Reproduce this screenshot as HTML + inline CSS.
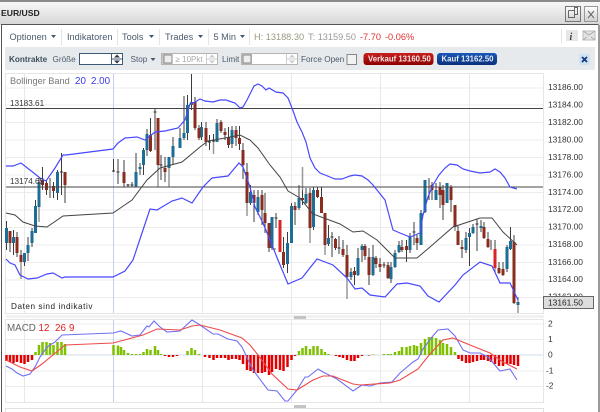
<!DOCTYPE html>
<html><head><meta charset="utf-8"><style>
html,body{margin:0;padding:0;background:#fff;overflow:hidden}
svg{display:block;font-family:"Liberation Sans",sans-serif;filter:blur(.3px)}
.t{font-size:9.2px;fill:#4a5a6c}
.s{font-size:8.2px;fill:#4a5a6c}
.a{font-size:8.4px;fill:#333}
</style></head><body>
<svg width="600" height="412" viewBox="0 0 600 412" xmlns="http://www.w3.org/2000/svg">
<defs>
<linearGradient id="tb" x1="0" y1="0" x2="0" y2="1"><stop offset="0" stop-color="#fafafa"/><stop offset="1" stop-color="#d6d6d6"/></linearGradient>
<linearGradient id="rb" x1="0" y1="0" x2="0" y2="1"><stop offset="0" stop-color="#c82020"/><stop offset="1" stop-color="#8c0000"/></linearGradient>
<linearGradient id="bb" x1="0" y1="0" x2="0" y2="1"><stop offset="0" stop-color="#1a58b8"/><stop offset="1" stop-color="#08307c"/></linearGradient>
<linearGradient id="gb" x1="0" y1="0" x2="0" y2="1"><stop offset="0" stop-color="#fff"/><stop offset="1" stop-color="#cfcfcf"/></linearGradient>
</defs>
<rect width="600" height="412" fill="#fff"/>
<!-- title -->
<rect x="0" y="0" width="600" height="25" fill="url(#tb)"/>
<rect x="0" y="0" width="600" height="2" fill="#8a8a8a"/>
<text x="1" y="16" font-size="8.6" font-weight="bold" fill="#222">EUR/USD</text>
<rect x="565.5" y="6.5" width="15" height="15" fill="url(#gb)" stroke="#777"/>
<path d="M569.5 10.5h6v-3h3v7h-3M569.5 10.5v7h6v-7" transform="translate(-1 0)" fill="none" stroke="#666"/>
<rect x="584.5" y="6.5" width="13" height="15" fill="url(#gb)" stroke="#999"/>
<path d="M588 11l6 7M594 11l-6 7" stroke="#666" fill="none"/>
<!-- window frame -->
<rect x="1" y="24.5" width="598" height="387" fill="#fff"/>
<path d="M1.5 412V24.5H598.5" fill="none" stroke="#555"/>
<rect x="598" y="25" width="2" height="387" fill="#9a9a9a"/>
<!-- toolbar 1 -->
<text class="t" x="9.5" y="40">Optionen</text>
<path d="M51 35h5l-2.5 3z" fill="#44566a"/>
<path d="M61.5 29v16M117.5 29v16M159.5 29v16M208.5 29v16M249.5 29v16M561.5 29v14" stroke="#e4e4e4"/>
<text class="t" x="67" y="40">Indikatoren</text>
<text class="t" x="122" y="40">Tools</text>
<path d="M149 35h5l-2.500 3z" fill="#44566a"/>
<text class="t" x="165" y="40">Trades</text>
<path d="M198 35h5l-2.500 3z" fill="#44566a"/>
<text class="t" x="213.500" y="40">5 Min</text>
<path d="M240 35h5l-2.500 3z" fill="#44566a"/>
<text x="254" y="40" font-size="9.200" fill="#9a9a80">H: 13188.30</text>
<text x="308" y="40" font-size="9.200" fill="#999">T: 13159.50</text>
<text x="360" y="40" font-size="9.200" fill="#e03030">-7.70</text>
<text x="385" y="40" font-size="9.200" fill="#e03030">-0.06%</text>
<rect x="566" y="30" width="12" height="11" fill="#e6e6e6"/>
<text x="569.500" y="40" font-size="10" font-weight="bold" font-style="italic" fill="#444" font-family="Liberation Serif">i</text>
<rect x="583" y="31" width="12" height="9" fill="#e4e4e4" stroke="#bbb"/>
<path d="M583 31l6 4 6-4M583 40l4-3M595 40l-4-3" stroke="#aaa" fill="none"/>
<!-- toolbar 2 -->
<rect x="5" y="47" width="590" height="23" fill="#e6eaec"/>
<text x="9" y="62" font-size="8.200" font-weight="bold" fill="#3c5060">Kontrakte</text>
<text class="s" x="52.500" y="62">Größe</text>
<rect x="79.500" y="53.500" width="43" height="11" fill="#fff" stroke="#3c5a78"/>
<path d="M111.500 54v10M112 59h10" stroke="#3c5a78"/>
<path d="M114 57.500h6l-3-3zM114 60.500h6l-3 3z" fill="#334"/>
<text class="s" x="130.500" y="62">Stop</text>
<path d="M150.500 58h5l-2.500 3z" fill="#44566a"/>
<rect x="161.500" y="53.500" width="56" height="11" fill="#fff" stroke="#b4b4b4"/>
<rect x="162" y="54" width="10" height="10" fill="#c9c9c9"/>
<rect x="164" y="55" width="8" height="8" fill="#eee" stroke="#888"/>
<text x="175.500" y="62" font-size="8" fill="#aaa">≥ 10Pkt</text>
<path d="M206.500 54v10M207 59h10" stroke="#ccc"/>
<path d="M209 57.500h6l-3-3zM209 60.500h6l-3 3z" fill="#ccc"/>
<text class="s" x="222" y="62">Limit</text>
<rect x="241.500" y="53.500" width="56" height="11" fill="#fff" stroke="#b4b4b4"/>
<rect x="242" y="54" width="10" height="10" fill="#c9c9c9"/>
<rect x="243" y="55" width="8" height="8" fill="#eee" stroke="#888"/>
<path d="M286.500 54v10M287 59h10" stroke="#ccc"/>
<path d="M289 57.500h6l-3-3zM289 60.500h6l-3 3z" fill="#ccc"/>
<text class="s" x="301" y="62">Force Open</text>
<rect x="347" y="54.500" width="9.500" height="10" fill="#f2f2f2" stroke="#888"/>
<rect x="363.500" y="53" width="70" height="12" rx="3" fill="url(#rb)"/>
<text x="368" y="61.500" font-size="7.800" font-weight="bold" fill="#fff" fill-opacity=".9">Verkauf 13160.50</text>
<rect x="437" y="53" width="60" height="12" rx="3" fill="url(#bb)"/>
<text x="441.500" y="61.500" font-size="7.800" font-weight="bold" fill="#fff" fill-opacity=".9">Kauf 13162.50</text>
<rect x="579" y="54" width="11" height="11" rx="2" fill="#cfe2f2"/>
<path d="M582 57l5 5M587 57l-5 5" stroke="#123a7c" stroke-width="1.800"/>
<!-- chart frame -->
<rect x="5.500" y="73.500" width="538" height="240" fill="#fff" stroke="#e6e6e6"/>
<path d="M6 88H543M6 105H543M6 122.500H543M6 140H543M6 157.500H543M6 175H543M6 192.500H543M6 210H543M6 227.500H543M6 245H543M6 262.500H543M6 280H543M6 297.500H543" stroke="#ececec" stroke-width="1"/>
<path d="M24.500 74V313M202.500 74V313M291.500 74V313M380.500 74V313M469.500 74V313" stroke="#e8e8e8"/>
<path d="M113.500 74V313" stroke="#c4cfe8"/>
<rect x="6" y="315" width="538" height="3" fill="#f2f2f2"/>
<!-- wicks -->
<path fill="none" stroke="#3c3c3c" stroke-width="1" d="M6.500 221V250M10 231V252M13.500 230V255M17 232V257M21 250V258M24.500 253V266M28 237V261M32 228V247M35.500 200V233M39 178V210M42.500 167V190M46.500 180V195M50 178V198M53.500 182V198M57.500 170V200M61.500 153V195M65 172V203M113.500 159V172M118 159V184M124 160V187M128 184V187M132 182V187M136 153V187M140 163V175M143.500 148V175M147 129V156M150.500 118V152M155 108V150M158 118V165M161 155V180M165 157V182M169 157V175M173 137V165M180 128V148M184 96V140M187.500 95V140M191.500 74V110M195 97V130M199 125V140M201.500 122V140M206 122V146M209.500 135V150M213.500 134V146M217 119V142M221 120V133M225 128V140M228.500 127V148M232 126V148M236 126V146M239.500 126V150M243 143V179M247 163V205M250.500 185V205M254 190V222M258 190V212M262 190V225M265 193V233M269 223V252M272 217V250M276 213V228M280 220V252M283.500 237V268M287.500 232V273M291.500 203V243M295 202V225M299 185V210M302.500 190V205M306 188V204M310 188V228M313.500 187V230M317.500 187V198M321.500 187V213M325 213V245M328.500 225V246M332 232V257M335.500 238V250M339 236V254M343 240V257M347 245V277M351 268V280M354.500 267V285M358 248V276M362 244V262M365 244V260M369 248V285M373 245V276M376 256V268M380 258V272M384 262V268M388 262V279M391 262V283M395 250V268M399 241V253M402 240V252M406.500 240V262M410 233V253M414 222V245M417 235V250M421 210V245M425 180V213M429 178V200M432 182V200M436 183V198M440 182V208M443 185V220M447 183V203M451 185V212M455 205V228M458 226V245M462 240V258M466 232V253M469.500 228V266M473 224V234M477 219V251M481 220V232M484 222V239M488 232V248M491 240V250M495 240V268M499 262V274M503 262V276M507 245V272M510.500 227V250M514 235V304" />
<!-- grey tails -->
<path fill="none" stroke="#999" stroke-width="1.500" d="M21 262V279M39 207V222M247 203V216M258 212V215M275 248V250M310 228V243M325 245V255M347 277V299M455 227V231M518 297V313M495 268V272M158 165V187M169 168V187M136 172V187M213.500 142V154M302.500 167V190"/>
<!-- bodies -->
<path fill="none" stroke="#1c6e96" stroke-width="3" d="M6.500 228V243M13.500 237V243M24.500 253V262M28 245V253M32 231V243M35.500 206V233M39 182V207M57.500 172V193M136 172V187M140 167V169M143.500 150V165M147 134V150M169 157V168M173 146V157M180 138V148M184 133V138M187.500 105V133M191.500 102V105M201.500 127V137M217 123V142M232 130V144M250.500 192V203M258 197V212M272 217V248M287.500 243V264M291.500 206V243M299 198V208M306 194V203M313.500 190V227M328.500 238V244M351 272V277M358 258V275M362 246V250M373 257V275M391 267V279M395 253V267M399 245V252M410 237V250M421 213V245M425 180V212M436 190V200M447 183V203M466 238V250M469.500 233V237M473 227V233M481 226V228M507 247V269M510.500 241V249M518 302V305"/>
<path fill="none" stroke="#8a2c20" stroke-width="3" d="M10 231V243M17 237V253M21 255V262M42.500 180V185M46.500 183V190M53.500 186V191M65 172V185M124 172V183M150.500 135V151M158 118V165M165 168V172M195 102V128M199 128V138M206 128V142M221 122V131M225 132V135M228.500 137V145M236 130V138M239.500 138V144M243 150V165M247 172V203M254 195V203M262 195V210M265 213V223M269 223V248M283.500 252V265M295 206V210M302.500 198V200M310 193V228M317.500 190V197M321.500 197V213M325 213V245M335.500 239V248M343 249V255M347 255V277M354.500 271V275M365 246V256M369 257V275M376 258V264M380 264V267M388 265V278M402 247V250M406.500 246V250M417 238V243M432 185V190M440 187V195M443 190V205M451 187V200M455 205V227M458 231V245M462 247V249M484 227V238M488 239V247M499 268V273M503 269V275M514 242V303"/>
<path fill="none" stroke="#d82424" stroke-width="3" d="M280 220V252M495 249V268"/>
<!-- doji ticks -->
<path stroke="#333" stroke-width="1" fill="none" d="M60 172h3M112 171h3M116.500 172h3M126.500 185h3M130.500 185h3M153.500 112h3M159.500 165h3M208 142h3M212 141h3M274.500 218h3M330.500 237h3M337.500 248h3M382.500 265h3M412.500 232h3M475.500 224h3"/>
<!-- hlines -->
<path d="M6 108.500H543M6 187H543" stroke="#444" stroke-width="1"/>
<!-- bands -->
<polyline fill="none" stroke="#4848ff" stroke-width="1.200" points="6,166 13,166 21,163 30,170 40,178 46,181 55,168 63,155 66,155 113,149 118,143 125,138 137,137 145,140 155,132 165,131 178,128 185,120 190,104 195,102 200,99 205,101 213,102 220,100 226,100 235,103 240,108 243,107 247,100 250,94 254,86 258,84 262,86 266,90 269,88 276,92 283,93 288,98 292,108 297,122 302,132 306,142 310,158 315,168 320,173 325,175 330,177 335,179 342,179 350,176 355,175 362,176 368,180 373,185 377,190 385,200 393,230 400,233 410,237 420,233 423,215 428,197 433,185 439,175 445,168 450,164 457,165 463,169 470,171 480,173 490,172 495,169 500,172 505,178 510,187 517,189"/>
<polyline fill="none" stroke="#4848ff" stroke-width="1.200" points="6,259 10,263 15,265 20,275 28,279 37,278 47,274 53,273 62,278 65,277 113,277 125,271 133,260 142,233 150,209 157,210 172,201 182,198 192,203 203,187 212,178 228,176 239,163 243,167 250,187 255,207 263,223 272,245 278,260 288,284 302,278 317,259 333,265 347,278 355,289 362,288 370,295 385,297 397,284 407,283 420,286 428,296 439,302 455,285 463,275 480,262 492,266 500,283 510,283 518,300"/>
<polyline fill="none" stroke="#444" stroke-width="1" points="6,213 15,215 23,222 35,226 47,227 63,216 113,213 132,200 147,180 160,168 182,162 200,147 208,141 225,138 240,135 250,140 258,148 270,165 280,177 288,191 300,198 313,214 340,224 353,232 363,231 377,240 395,258 417,258 430,247 453,227 480,218 492,218 503,232 517,245"/>
<!-- labels -->
<text x="10" y="84" font-size="9.200" fill="#777">Bollinger Band</text>
<text x="75" y="84" font-size="9.800" fill="#3a3af0">20</text>
<text x="91" y="84" font-size="9.800" fill="#3a3af0">2.00</text>
<text x="10" y="106" font-size="8.200" fill="#333">13183.61</text>
<text x="10" y="184" font-size="8.200" fill="#333">13174.65</text>
<text x="11" y="309" font-size="8.200" fill="#222" letter-spacing=".55">Daten sind indikativ</text>
<!-- axis -->
<g class="a">
<text class="a" x="548" y="90">13186.00</text>
<text class="a" x="548" y="107.500">13184.00</text>
<text class="a" x="548" y="125">13182.00</text>
<text class="a" x="548" y="142.500">13180.00</text>
<text class="a" x="548" y="160">13178.00</text>
<text class="a" x="548" y="177.500">13176.00</text>
<text class="a" x="548" y="195">13174.00</text>
<text class="a" x="548" y="212">13172.00</text>
<text class="a" x="548" y="229.500">13170.00</text>
<text class="a" x="548" y="247">13168.00</text>
<text class="a" x="548" y="265">13166.00</text>
<text class="a" x="548" y="282">13164.00</text>
<text class="a" x="548" y="299.500">13162.00</text>
</g>
<rect x="543.500" y="296.500" width="50" height="12" fill="#dedede" stroke="#666"/>
<text x="548" y="305.500" font-size="8.400" fill="#222">13161.50</text>
<rect x="294" y="316" width="12" height="4" fill="#c4c4c4"/>
<!-- MACD -->
<rect x="5.500" y="319.500" width="538" height="83" fill="#fff" stroke="#e6e6e6"/>
<path d="M6 324H543M6 339.500H543M6 371H543M6 386.500H543" stroke="#ececec"/>
<path d="M6 355H543" stroke="#d0dcec"/>
<path d="M24.500 320V402M202.500 320V402M291.500 320V402M380.500 320V402M469.500 320V402" stroke="#e8e8e8"/>
<path d="M113.500 320V402" stroke="#c4cfe8"/>
<path fill="none" stroke="#7fc000" stroke-width="2.500" d="M35.500 355V352M39 355V345M42.500 355V342M46.500 355V342M50 355V343M53.500 355V345M57.500 355V342M61.500 355V342M65 355V344M113.500 355V345M118 355V345.500M121 355V347M124 355V350M128 355V353M132 355V354M136 355V354M140 355V354M143.500 355V352M147 355V349M150.500 355V350M155 355V346M158 355V350M161 355V354M187.500 355V351M191.500 355V348M195 355V350M199 355V354M299 355V351M302.500 355V348M306 355V346M310 355V349M313.500 355V346M317.500 355V346M321.500 355V349M325 355V352M328.500 355V354M373 355V354.500M384 355V354M388 355V354M391 355V354M395 355V352M399 355V351M402 355V347M406.500 355V347M410 355V346M414 355V345M417 355V346M421 355V343M425 355V339M429 355V337M432 355V337M436 355V338M440 355V340M443 355V343M447 355V344M451 355V347M455 355V352"/>
<path fill="none" stroke="#e20000" stroke-width="2.500" d="M6.500 355V361M10 355V362M13.500 355V363M17 355V362M21 355V363M24.500 355V364M28 355V362M32 355V360M165 355V356M169 355V357M173 355V357M177 355V356M205 355V357M209.500 355V358M213.500 355V360M217 355V358M221 355V358M225 355V358M228.500 355V360M232 355V359M236 355V359M239.500 355V360M243 355V364M247 355V370M250.500 355V371M254 355V373M258 355V373M262 355V373M265 355V372M269 355V375M272 355V372M276 355V369M280 355V370M283.500 355V371M287.500 355V367M291.500 355V360M295 355V356M336 355V356M339.500 355V357M343 355V358M347 355V360M351 355V361M354.500 355V361M358 355V358M362 355V356M369 355V355.500M458.500 355V359M462 355V361M466 355V363M469.500 355V363M473 355V362M477 355V361M481 355V360M484 355V360M488 355V361M491 355V362M495 355V364M499 355V366M503 355V366M507 355V364M510.500 355V364M514 355V365M518 355V366"/>
<polyline fill="none" stroke="#7070f4" stroke-width="1.100" points="6,366 12,369 17,373 23,376 30,374 35,367 40,357 47,347 55,342 62,335 113,333 121,331 132,336 140,335 147,326 149,327 154,321 160,327 167,332 180,331 192,320 200,325 213,334 218,334 228,339 237,341 242,347 253,370 268,390 277,391 285,401 288,401 297,390 305,377 308,377 318,369 323,372 337,379 353,391 362,385 370,386 380,383 392,382 400,373 413,362 418,359 423,349 432,337 438,330 448,329 455,336 463,350 470,353 480,353 488,357 500,371 510,369 517,380"/>
<polyline fill="none" stroke="#ee4a4a" stroke-width="1.100" points="6,360 20,367 32,371 42,364 65,345 113,343 132,338 143,335 157,329 180,330 192,326 200,325 220,330 242,338 250,345 258,355 272,374 288,389 297,390 313,380 323,376 333,376 353,384 360,385 390,383 400,380 418,369 430,354 443,340 453,338 470,345 490,353 503,362 517,369"/>
<text x="7" y="331" font-size="9.800" fill="#666">MACD</text>
<text x="38.500" y="331" font-size="9.800" fill="#e02020">12</text>
<text x="55" y="331" font-size="9.800" fill="#e02020">26</text>
<text x="69" y="331" font-size="9.800" fill="#e02020">9</text>
<text class="a" x="548" y="326.500">2</text>
<text class="a" x="548" y="342">1</text>
<text class="a" x="548" y="357.500">0</text>
<text class="a" x="546" y="373.500">-1</text>
<text class="a" x="546" y="388.500">-2</text>
<rect x="294" y="405" width="12" height="4" fill="#c4c4c4"/>
<path d="M5.500 412V408.500H543.500V412" fill="none" stroke="#e2e2e2"/>
</svg>
</body></html>
